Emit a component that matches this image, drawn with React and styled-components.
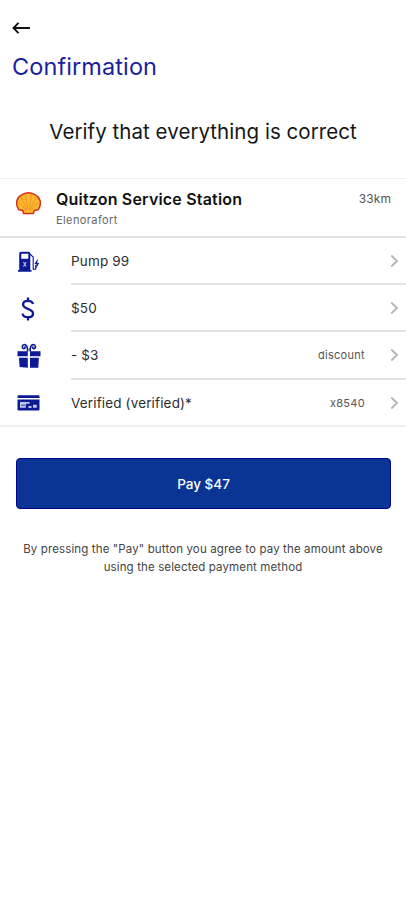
import React from 'react';
import styled, { createGlobalStyle } from 'styled-components';

const colors = {
  title: '#1b1f9c',
  icon: '#0c1a94',
  button: '#0a3595',
  buttonBorder: '#06068c',
  line: '#e4e4e4',
  text: '#2e2e2e',
  muted: '#555'
};

const GlobalStyle = createGlobalStyle`
  body {
    margin: 0;
    background: #fff;
    font-family: Inter, 'Liberation Sans', sans-serif;
  }
`;

const Screen = styled.div`
  box-sizing: border-box;
  width: 406px;
  height: 900px;
  overflow: hidden;
  background: #fff;
`;

const Header = styled.header`
  display: flex;
  flex-direction: column;
  height: 84px;
  padding: 20px 12px 0;
  box-sizing: border-box;
`;

const BackButton = styled.button`
  display: flex;
  width: 20px;
  height: 16px;
  padding: 0;
  border: 0;
  background: none;
`;

const Title = styled.h1`
  margin: 16px 0 0;
  color: ${colors.title};
  font-size: 23.5px;
  font-weight: 400;
  line-height: 30px;
  letter-spacing: 0.1px;
`;

const Heading = styled.h2`
  height: 94px;
  margin: 0;
  color: #161616;
  font-size: 20.5px;
  font-weight: 400;
  line-height: 95px;
  letter-spacing: 0.05px;
  text-align: center;
  white-space: nowrap;
`;

const Station = styled.section`
  display: flex;
  align-items: flex-start;
  height: 60px;
  box-sizing: border-box;
  padding: 12px 15px 0 16px;
  border-top: 1px solid #f0f0f0;
  border-bottom: 2px solid ${colors.line};
`;

const StationInfo = styled.div`
  flex: 1;
  margin: -1px 0 0 15px;
`;

const StationName = styled.div`
  color: #111;
  font-size: 16px;
  font-weight: 600;
  line-height: 18px;
  letter-spacing: 0.19px;
`;

const StationCity = styled.div`
  margin-top: 5px;
  color: #666;
  font-size: 11px;
  line-height: 14px;
  letter-spacing: 0.4px;
`;

const Distance = styled.div`
  color: #555;
  font-size: 12px;
  line-height: 15px;
  letter-spacing: 0.1px;
`;

const List = styled.section`
  border-bottom: 2px solid #efefef;
`;

const Row = styled.div`
  display: flex;
  height: ${props => props.$height}px;
`;

const RowIcon = styled.div`
  display: flex;
  justify-content: center;
  align-items: center;
  width: 57px;
  margin-right: 14px;
`;

const RowBody = styled.div`
  display: flex;
  flex: 1;
  align-items: center;
  box-sizing: border-box;
  padding-right: 7px;
  border-bottom: ${props => (props.$last ? '0' : `2px solid ${colors.line}`)};
`;

const RowLabel = styled.div`
  flex: 1;
  color: ${colors.text};
  font-size: 13.5px;
  line-height: 16px;
  letter-spacing: 0.15px;
`;

const RowNote = styled.div`
  margin-right: 24px;
  color: ${colors.muted};
  font-size: 11px;
  line-height: 14px;
  letter-spacing: 0.3px;
`;

const PayButton = styled.button`
  display: block;
  width: 375px;
  height: 51px;
  margin: 31px 0 0 16px;
  padding: 0;
  border: 1px solid ${colors.buttonBorder};
  border-radius: 4px;
  background: ${colors.button};
  color: #fff;
  font-family: inherit;
  font-size: 13.5px;
  font-weight: 500;
`;

const Terms = styled.p`
  margin: 31px 0 0;
  color: #444;
  font-size: 11.5px;
  line-height: 18px;
  letter-spacing: 0.13px;
  text-align: center;
  white-space: nowrap;
`;

const BackIcon = () => (
  <svg width="20" height="16" viewBox="0 0 20 16" fill="none" stroke="#111" strokeWidth="1.9">
    <path d="M18 8H2M6.500 2.800L1.500 8l5 5.200" />
  </svg>
);

const ShellIcon = () => (
  <svg width="25" height="24" viewBox="0 0 25 24">
    <path
      d="M7.500 22.600L6.800 19.500 2.800 18.800C.6 15.200.2 12 1 9.400 2 6.400 4 4.500 6.500 3.400c3.500-2 8.500-2 12 0C21 4.500 23 6.400 24 9.400c.8 2.600.4 5.800-1.800 9.400l-4 .7-.7 3.100z"
      fill="#fcb92c"
      stroke="#d9301e"
      strokeWidth="1.5"
      strokeLinejoin="round"
    />
    <path
      d="M10.500 19.500L2.800 11.500M11 19L5 6M11.800 19L9.600 3.500M13.200 19l2.200-15.500M14 19l6-13M14.500 19.500l7.700-8"
      stroke="#ee8a2a"
      strokeWidth="0.9"
      fill="none"
    />
  </svg>
);

const PumpIcon = () => (
  <svg width="23" height="22" viewBox="0 0 23 22" fill={colors.icon}>
    <path
      fillRule="evenodd"
      d="M2.200 2.500a1.800 1.800 0 0 1 1.800-1.800h7.500a1.800 1.800 0 0 1 1.800 1.800V19h1.200v1.700H1V19h1.200zM4.300 2.700v5h7v-5z"
    />
    <path d="M13 3l3.200 3v12.200h2.500v-4.500" fill="none" stroke={colors.icon} strokeWidth="1.100" />
    <path d="M20.800 7.500l-3.300 5.500h2l-.8 5 3.500-6h-2z" />
    <path d="M6.500 11l2.600 4.500M9.100 11l-2.600 4.500" stroke="#b4b9e4" strokeWidth="1.200" fill="none" />
  </svg>
);

const DollarIcon = () => (
  <svg width="15" height="24" viewBox="0 0 15 24" fill="none" stroke={colors.icon} strokeWidth="2.300">
    <path d="M12 7C11.400 4.900 9.600 3.800 6.800 3.800S2.100 5.100 2.100 7.300C2.100 10 4.200 10.900 6.800 11.800s5.200 1.900 5.200 4.600c0 2.400-2 3.800-5 3.800s-5.100-1.400-5.500-3.600M7 .5v3.200M7 20v3.400" />
  </svg>
);

const GiftIcon = () => (
  <svg width="24" height="26" viewBox="0 0 24 26" fill={colors.icon}>
    <path d="M.500 8.300h10.300v4.900H.500zM13 8.300h10.500v4.900H13zM2 14.700h8.800v10L2.600 24zM13 14.700h8.900l-.6 10H13z" />
    <g fill="none" stroke={colors.icon} strokeWidth="1.700">
      <path d="M10.500 8.500C11 4.500 9.500 1.500 7.300 1.500S4.500 5.300 6.800 5.600c1.800 0 1.500-1.800.5-1.800" />
      <path d="M13.200 8.500c-.5-4 1-7 3.200-7s2.900 3.800.6 4.100c-1.800 0-1.500-1.800-.5-1.800" />
    </g>
  </svg>
);

const CardIcon = () => (
  <svg width="23" height="18" viewBox="0 0 23 18">
    <path d="M.5 2.200a1 1 0 0 1 1-1h20a1 1 0 0 1 1 1V4H.5zM.5 5.500h22v10a1 1 0 0 1-1 1h-20a1 1 0 0 1-1-1z" fill={colors.icon} />
    <path d="M3 8h9.500v1.800H8.800v4H3zM11.500 12h3v1.900h-3zM16 10.800h3.800v2.900H16z" fill="#c3c7ea" />
    <path d="M4 11.200h4" stroke={colors.icon} strokeWidth="0.800" />
  </svg>
);

const Chevron = () => (
  <svg width="10" height="14" viewBox="0 0 10 14" fill="none" stroke="#b5b5b5" strokeWidth="1.800">
    <path d="M2.300 1.500L8 7l-5.700 5.500" />
  </svg>
);

const rows = [
  { icon: <PumpIcon />, label: 'Pump 99', height: 47 },
  { icon: <DollarIcon />, label: '$50', height: 47 },
  { icon: <GiftIcon />, label: '- $3', note: 'discount', height: 48 },
  { icon: <CardIcon />, label: 'Verified (verified)*', note: 'x8540', height: 45 }
];

const App = () => (
  <Screen>
    <GlobalStyle />
    <Header>
      <BackButton aria-label="Back">
        <BackIcon />
      </BackButton>
      <Title>Confirmation</Title>
    </Header>
    <Heading>Verify that everything is correct</Heading>
    <Station>
      <ShellIcon />
      <StationInfo>
        <StationName>Quitzon Service Station</StationName>
        <StationCity>Elenorafort</StationCity>
      </StationInfo>
      <Distance>33km</Distance>
    </Station>
    <List>
      {rows.map((row, i) => (
        <Row key={row.label} $height={row.height}>
          <RowIcon>{row.icon}</RowIcon>
          <RowBody $last={i === rows.length - 1}>
            <RowLabel>{row.label}</RowLabel>
            {row.note && <RowNote>{row.note}</RowNote>}
            <Chevron />
          </RowBody>
        </Row>
      ))}
    </List>
    <PayButton>Pay $47</PayButton>
    <Terms>
      By pressing the "Pay" button you agree to pay the amount above
      <br />
      using the selected payment method
    </Terms>
  </Screen>
);

export default App;
